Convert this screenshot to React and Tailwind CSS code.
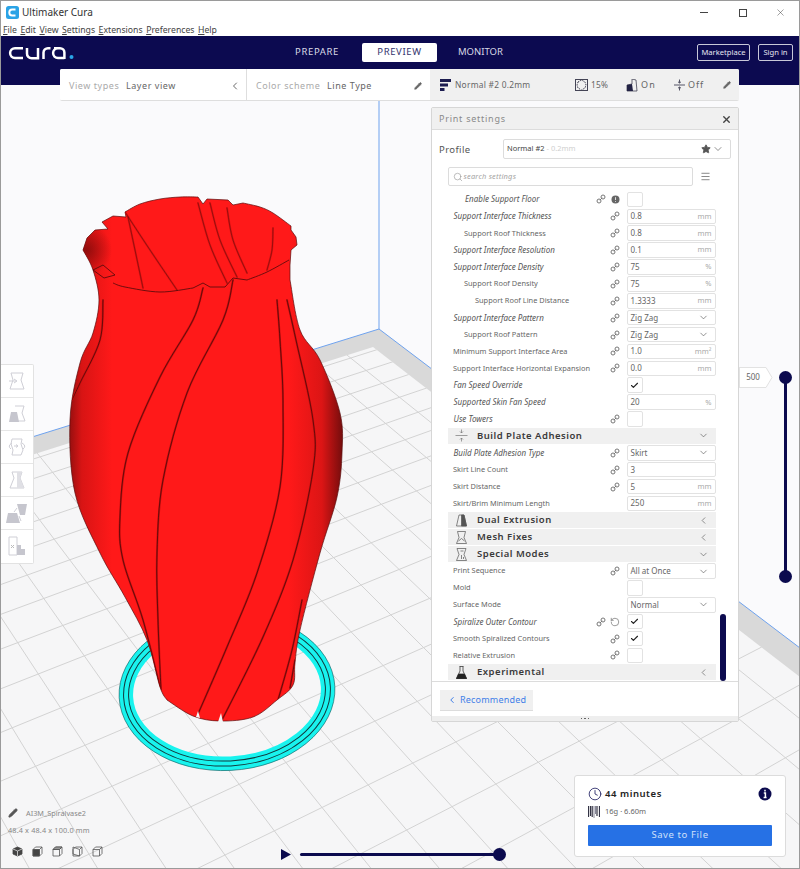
import { Check, ChevronDown, ChevronLeft, Clock, Menu, Search, Star, X, Pencil, RotateCcw } from "lucide-react";

const font = { fontFamily: '"Noto Sans", sans-serif' };

// smooth curve through points (catmull-rom to bezier)
function curve(pts) {
  let d = "";
  for (let i = 0; i < pts.length - 1; i++) {
    const p0 = pts[i - 1] || pts[i];
    const p1 = pts[i];
    const p2 = pts[i + 1];
    const p3 = pts[i + 2] || p2;
    const c1 = [p1[0] + (p2[0] - p0[0]) / 6, p1[1] + (p2[1] - p0[1]) / 6];
    const c2 = [p2[0] - (p3[0] - p1[0]) / 6, p2[1] - (p3[1] - p1[1]) / 6];
    d += ` C${c1[0]} ${c1[1]} ${c2[0]} ${c2[1]} ${p2[0]} ${p2[1]}`;
  }
  return d;
}
const open = (pts) => `M${pts[0][0]} ${pts[0][1]}` + curve(pts);

const rimLeft = [[83, 250], [87, 238], [95, 230], [108, 229], [102, 222], [113, 216], [126, 217], [125, 212]];
const rimBack = [[125, 212], [140, 204], [160, 199], [180, 197], [198, 197]];
const rimRight = [[198, 197], [203, 204], [207, 199], [228, 200], [233, 205], [243, 203]];
const rimFar = [[243, 203], [260, 207], [273, 213], [291, 226]];
const rimEnd = [[291, 226], [291, 230], [296, 237], [297, 245], [291, 250], [290, 265], [290, 280]];
const rightSide = [
  [290, 280], [300, 330], [320, 360], [340, 413], [342, 453], [337, 497], [320, 553], [300, 630], [295, 663], [293, 685], [277, 700],
  [253, 717], [220, 721], [193, 716], [167, 700],
];
const leftSide = [
  [167, 700], [160, 687], [147, 640], [125, 597], [100, 553], [75, 493], [70, 420], [80, 363], [93, 333], [99, 300], [93, 270], [83, 250],
];
const lines = (pts) => pts.slice(1).map((p) => `L${p[0]} ${p[1]}`).join(" ");
const vaseOutline =
  `M83 250 ${lines(rimLeft)}` + curve(rimBack) + " " + lines(rimRight) + curve(rimFar) + " " + lines(rimEnd) + curve(rightSide) + curve(leftSide) + " Z";

const ridges = [
  [[203, 288], [193, 320], [160, 377], [128, 453], [120, 517], [123, 560], [143, 620], [160, 687]],
  [[233, 280], [223, 320], [187, 393], [163, 480], [157, 553], [158, 620], [161, 690]],
  [[277, 300], [280, 340], [283, 403], [280, 487], [257, 573], [227, 647], [198, 714]],
  [[287, 300], [296, 340], [313, 420], [313, 470], [293, 560], [263, 637], [222, 720]],
  [[103, 300], [100, 340], [80, 383], [72, 400]],
  [[302, 600], [292, 650], [278, 700]],
  [[295, 660], [290, 688]],
];
const innerRidges = [
  [[125, 212], [150, 250], [177, 290]],
  [[128, 217], [135, 250], [143, 288]],
  [[198, 203], [210, 245], [227, 283]],
  [[210, 203], [220, 240], [237, 277]],
  [[227, 208], [233, 240], [247, 273]],
  [[273, 228], [272, 250], [267, 270]],
];

function Scene() {
  const vaA = [-750, -526];
  const vaB = [2890, -450];
  const linesA = [];
  for (let k = -16; k < 14; k++) {
    const x = 50 + 64.5 * k;
    const t = (900 - vaA[1]) / (790 - vaA[1]);
    linesA.push([vaA[0], vaA[1], vaA[0] + (x - vaA[0]) * t, 900]);
  }
  const ysB = [458, 476, 496, 517, 540, 565, 592, 622, 657, 697, 741, 790, 845, 905, 975, 1050, 1130, 1220];
  const linesB = ysB.map((y) => [-10, y - (10 * (y - vaB[1])) / vaB[0], vaB[0], vaB[1]]);

  return (
    <svg className="absolute inset-0" width="800" height="784" viewBox="0 85 800 784">
      <defs>
        <clipPath id="floor">
          <polygon points="373,347 0,465 0,869 800,869 800,677" />
        </clipPath>
        <clipPath id="vaseClip">
          <path d={vaseOutline} />
        </clipPath>
        <linearGradient id="vaseFill" gradientUnits="userSpaceOnUse" x1="68" x2="344" y1="0" y2="0">
          <stop offset="0" stopColor="#8f0f0f" />
          <stop offset="0.05" stopColor="#d81414" />
          <stop offset="0.16" stopColor="#ff1919" />
          <stop offset="0.8" stopColor="#ff1919" />
          <stop offset="0.92" stopColor="#dc1515" />
          <stop offset="1" stopColor="#6d0c0c" />
        </linearGradient>
        <radialGradient id="innerDark" gradientUnits="userSpaceOnUse" cx="86" cy="250" r="26">
          <stop offset="0" stopColor="#7d0a0a" stopOpacity="0.8" />
          <stop offset="1" stopColor="#7d0a0a" stopOpacity="0" />
        </radialGradient>
      </defs>
      <rect x="0" y="85" width="800" height="784" fill="#fafafc" />
      <polygon points="379,329 0,447 0,869 800,869 800,648" fill="#d9d9d9" />
      <polygon points="373,347 0,465 0,869 800,869 800,677" fill="#f6f6f7" />
      <g clipPath="url(#floor)" stroke="#d3d3d3" strokeWidth="1">
        {linesA.map((l, i) => (
          <line key={i} x1={l[0]} y1={l[1]} x2={l[2]} y2={l[3]} />
        ))}
        {linesB.map((l, i) => (
          <line key={i} x1={l[0]} y1={l[1]} x2={l[2]} y2={l[3]} />
        ))}
      </g>
      <path d="M379 100 V329 L0 447 M379 329 L800 648" fill="none" stroke="#6ea2ee" strokeWidth="1" />

      <g transform="rotate(-3 227 692)">
        <ellipse cx="227" cy="692" rx="101" ry="71.5" fill="none" stroke="#19f3ee" strokeWidth="14" />
        <ellipse cx="227" cy="692" rx="108" ry="78.5" fill="none" stroke="#14575a" strokeWidth="0.6" />
        <ellipse cx="227" cy="692" rx="103.5" ry="74" fill="none" stroke="#12383c" strokeWidth="1" />
        <ellipse cx="227" cy="692" rx="98.5" ry="69" fill="none" stroke="#12383c" strokeWidth="1" />
      </g>

      <path d={vaseOutline} fill="url(#vaseFill)" stroke="#5a0c0c" strokeWidth="0.7" />
      <g clipPath="url(#vaseClip)">
        <circle cx="86" cy="250" r="26" fill="url(#innerDark)" />
        <g fill="none" strokeLinecap="round">
          {ridges.map((r, i) => (
            <path key={i} d={open(r)} stroke="#c81010" strokeWidth="2" />
          ))}
          {innerRidges.map((r, i) => (
            <path key={i} d={open(r)} stroke="#dc1414" strokeWidth="2" />
          ))}
          {ridges.map((r, i) => (
            <path key={i} d={open(r)} stroke="#3a0808" strokeWidth="0.7" />
          ))}
          {innerRidges.map((r, i) => (
            <path key={i} d={open(r)} stroke="#6a0a0a" strokeWidth="0.6" />
          ))}
        </g>
      </g>
      <path
        d={"M93 270 L103 265 L115 275 L104 278 L93 270 M113 283" + curve([[113, 283], [125, 287], [160, 292], [193, 288]]) + " L197 286 L203 283 L210 287 L225 287 L233 278 L247 280" + curve([[247, 280], [267, 272], [289, 260]])}
        fill="none"
        stroke="#4a0a0a"
        strokeWidth="0.8"
      />
      <polygon points="196,717 198,711 200,718" fill="#f6f6f7" />
      <polygon points="218,722 221,713 223,722" fill="#f6f6f7" />
    </svg>
  );
}

const LinkIcon = () => (
  <svg width="10" height="10" viewBox="0 0 10 10" fill="none" stroke="#777" strokeWidth="1">
    <circle cx="3" cy="7" r="2" />
    <circle cx="7" cy="3" r="2" />
    <path d="M3.8 6.2 L6.2 3.8" />
  </svg>
);

const InfoDot = () => (
  <svg width="9" height="9" viewBox="0 0 9 9">
    <circle cx="4.5" cy="4.5" r="4" fill="#666" />
    <path d="M4.5 2.2 V5 M4.5 6 V6.9" stroke="#ddd" strokeWidth="1" />
  </svg>
);

function Flask({ kind, color = "#444" }) {
  return (
    <svg width="14" height="15" viewBox="0 0 14 15" fill="none" stroke={color} strokeWidth="0.7">
      {kind === "plate" && (
        <>
          <path d="M1 7.5 H13" stroke="#777" />
          <path d="M7 1.5 V5 M5.5 3.5 L7 5 L8.5 3.5 M7 13.5 V10 M5.5 11.5 L7 10 L8.5 11.5" stroke="#777" />
        </>
      )}
      {kind === "dual" && (
        <>
          <path d="M4.5 2 H9.5 L12 13 H2 Z" />
          <path d="M7 2 H9.5 L12 13 H7 Z" fill={color} />
        </>
      )}
      {kind === "mesh" && (
        <>
          <path d="M3 1.5 H11 L9.5 7.5 L12 13.5 H2 L4.5 7.5 Z" />
          <path d="M4 11 L7 8.5 L10 11" />
        </>
      )}
      {kind === "special" && (
        <>
          <path d="M2.5 1.5 H11.5 L9.5 7.5 L12 13.5 H2 L4.5 7.5 Z" />
          <path d="M6 4 H9 M7 8 V12 M9 10 V12" />
        </>
      )}
      {kind === "exp" && (
        <>
          <path d="M5 1.5 H9 M5.5 1.5 V6 L2 13.5 H12 L8.5 6 V1.5" />
          <path d="M4 9 H10 L12 13.5 H2 Z" fill={color} />
        </>
      )}
    </svg>
  );
}

const rows = [
  { label: "Enable Support Floor", ml: "ml-[17.5px]", it: true, type: "check", link2: true, info: true },
  { label: "Support Interface Thickness", ml: "ml-[6px]", it: true, value: "0.8", unit: "mm", link: true },
  { label: "Support Roof Thickness", ml: "ml-[16.5px]", value: "0.8", unit: "mm", link: true },
  { label: "Support Interface Resolution", ml: "ml-[6px]", it: true, value: "0.1", unit: "mm", link: true },
  { label: "Support Interface Density", ml: "ml-[6px]", it: true, value: "75", unit: "%", link: true },
  { label: "Support Roof Density", ml: "ml-[16.5px]", value: "75", unit: "%", link: true },
  { label: "Support Roof Line Distance", ml: "ml-[27.5px]", value: "1.3333", unit: "mm", link: true },
  { label: "Support Interface Pattern", ml: "ml-[6px]", it: true, value: "Zig Zag", select: true, link: true },
  { label: "Support Roof Pattern", ml: "ml-[16.5px]", value: "Zig Zag", select: true, link: true },
  { label: "Minimum Support Interface Area", ml: "ml-[5.5px]", value: "1.0", unit: "mm²", link: true },
  { label: "Support Interface Horizontal Expansion", ml: "ml-[5.5px]", value: "0.0", unit: "mm", link: true },
  { label: "Fan Speed Override", ml: "ml-[6px]", it: true, type: "check", checked: true },
  { label: "Supported Skin Fan Speed", ml: "ml-[6px]", it: true, value: "20", unit: "%" },
  { label: "Use Towers", ml: "ml-[6px]", it: true, type: "check", link: true },
  { section: "Build Plate Adhesion", icon: "plate", down: true },
  { label: "Build Plate Adhesion Type", ml: "ml-[6px]", it: true, value: "Skirt", select: true, link: true },
  { label: "Skirt Line Count", ml: "ml-[5.5px]", value: "3", link: true },
  { label: "Skirt Distance", ml: "ml-[5.5px]", value: "5", unit: "mm", link: true },
  { label: "Skirt/Brim Minimum Length", ml: "ml-[5.5px]", value: "250", unit: "mm" },
  { section: "Dual Extrusion", icon: "dual" },
  { section: "Mesh Fixes", icon: "mesh" },
  { section: "Special Modes", icon: "special", down: true },
  { label: "Print Sequence", ml: "ml-[5.5px]", value: "All at Once", select: true, link: true },
  { label: "Mold", ml: "ml-[5.5px]", type: "check" },
  { label: "Surface Mode", ml: "ml-[5.5px]", value: "Normal", select: true },
  { label: "Spiralize Outer Contour", ml: "ml-[6px]", it: true, type: "check", checked: true, link2: true, reset: true },
  { label: "Smooth Spiralized Contours", ml: "ml-[5.5px]", type: "check", checked: true, link: true },
  { label: "Relative Extrusion", ml: "ml-[5.5px]", type: "check", link: true },
  { section: "Experimental", icon: "exp" },
];

function SettingRow({ row }) {
  if (row.section) {
    return (
      <div className="flex items-center h-[16.9px] py-[0.5px]">
        <div className="flex items-center w-full h-full bg-[#f0f0f0]">
          <div className="w-[29.5px] flex justify-center -translate-x-[0.5px]">
            <Flask kind={row.icon} color={row.icon === "exp" ? "#222" : "#555"} />
          </div>
          <span className="flex-1 text-[9.5px] font-semibold tracking-[0.5px] text-[#3a3a3a]">{row.section}</span>
          {row.down ? (
            <ChevronDown size={11} strokeWidth={1.4} className="text-[#555] mr-[6.5px]" />
          ) : (
            <ChevronLeft size={11} strokeWidth={1.4} className="text-[#555] mr-[6.5px]" />
          )}
        </div>
      </div>
    );
  }
  return (
    <div className="flex items-center h-[16.9px]">
      <span className={"flex-1 min-w-0 whitespace-nowrap " + row.ml + (row.it ? " italic text-[8px] text-[#555]" : " text-[7.4px] text-[#666]")}>{row.label}</span>
      <div className="w-[14px] flex justify-center">{row.link2 && <LinkIcon />}</div>
      <div className="w-[14px] flex justify-center mr-[4.5px]">
        {row.link && <LinkIcon />}
        {row.info && <InfoDot />}
        {row.reset && <RotateCcw size={10} strokeWidth={1.4} className="text-[#555]" />}
      </div>
      {row.type === "check" ? (
        <div className="w-[89px] h-[15.5px]">
          <div className="w-[16px] h-full flex items-center justify-center bg-white border border-[#e2e2e2] rounded-[2px]">
            {row.checked && <Check size={9} strokeWidth={3} className="text-[#222]" />}
          </div>
        </div>
      ) : (
        <div className="w-[89px] h-[15.5px] flex items-center justify-between pl-[3px] pr-[3px] bg-white border border-[#e2e2e2] rounded-[2px] text-[8px] text-[#666]">
          <span>{row.value}</span>
          {row.unit && <span className="text-[7.5px] text-[#aaa]">{row.unit}</span>}
          {row.select && <ChevronDown size={11} strokeWidth={1.4} className="text-[#555] mr-[3px]" />}
        </div>
      )}
    </div>
  );
}

function PrintSettings() {
  return (
    <div className="absolute left-[431px] top-[22px] w-[308px] h-[615px] flex flex-col bg-white border border-[#d6d6d6] rounded-[2px]">
      <div className="flex items-center justify-between h-[22px] pl-[7px] pr-[6px] pt-[1px] bg-[#f0f0f0] border-b border-[#dcdcdc]">
        <span className="text-[9px] tracking-[0.75px] text-[#8a8a8a]">Print settings</span>
        <X size={11} strokeWidth={3} className="text-[#444]" />
      </div>
      <div className="flex items-center h-[20px] mt-[9px] ml-[7px]">
        <span className="w-[64px] translate-y-[1px] text-[9.5px] tracking-[0.4px] text-[#555]">Profile</span>
        <div className="w-[228px] h-full flex items-center pl-[3px] border border-[#dcdcdc] rounded-[2px] text-[7.5px]">
          <span className="flex-1 text-[#444]">
            Normal #2 <span className="text-[#cfcfcf]">- 0.2mm</span>
          </span>
          <Star size={10} className="text-[#555] fill-[#555] mr-[1px]" />
          <ChevronDown size={12} strokeWidth={1.3} className="text-[#555] mr-[6px]" />
        </div>
      </div>
      <div className="flex items-center h-[19px] mt-[8px] ml-[15.5px]">
        <div className="w-[245px] h-full flex items-center pl-[4px] border border-[#dcdcdc] rounded-[2px]">
          <Search size={10} strokeWidth={1.3} className="text-[#888]" />
          <span className="ml-[1px] text-[7.5px] italic tracking-[0.2px] text-[#a4a4a4]">search settings</span>
        </div>
        <Menu size={11} strokeWidth={1.5} className="ml-[7px] text-[#555]" />
      </div>
      <div className="relative mt-[5px] h-[489.5px] overflow-hidden pl-[15.5px]">
        <div className="w-[268px]">
          {rows.map((row, i) => (
            <SettingRow key={i} row={row} />
          ))}
        </div>
        <div className="absolute right-[12px] bottom-0 w-[6px] h-[67px] rounded-[3px] bg-[#0d0b4f]" />
      </div>
      <div className="flex-1 border-t border-[#dcdcdc] pt-[8px] pl-[8px]">
        <button className="flex items-center w-[93px] h-[21px] pl-[7px] bg-[#f0f0f0] border-b border-[#dcdcdc] text-[9px] tracking-[0.2px] text-[#3f7fe8]">
          <ChevronLeft size={10} strokeWidth={2.4} className="mr-[3px]" />
          Recommended
        </button>
      </div>
      <div className="h-[5px] flex items-center justify-center bg-[#eeeeee] gap-[2px]">
        <span className="w-[1.5px] h-[1.5px] bg-[#666]" />
        <span className="w-[1.5px] h-[1.5px] bg-[#666]" />
        <span className="w-[1.5px] h-[1.5px] bg-[#666]" />
      </div>
    </div>
  );
}

function StageBar() {
  return (
    <div className="absolute left-[60px] top-[-16px] w-[679px] h-[32px] flex bg-white text-[9px] tracking-[0.55px] text-[#666] border-b border-[#dedede] rounded-[2px] overflow-hidden">
      <div className="w-[187px] flex items-center bg-white border-r border-[#dedede] pl-[9px] pt-[2px]">
        <span className="w-[57px] text-[#aaa]">View types</span>
        <span className="flex-1">Layer view</span>
        <ChevronLeft size={12} strokeWidth={1.6} className="mr-[5px] text-[#444]" />
      </div>
      <div className="w-[183px] flex items-center bg-white pl-[9px] pt-[2px]">
        <span className="w-[71px] text-[#aaa] whitespace-nowrap">Color scheme</span>
        <span className="flex-1">Line Type</span>
        <Pencil size={8} className="mr-[8px] text-[#666] fill-[#666]" />
      </div>
      <div className="flex-1 flex items-center bg-[#f0f0f0] pt-[1px]">
        <svg className="ml-[10px]" width="11" height="12" viewBox="0 0 11 12" fill="#1c1c50">
          <rect x="0" y="0" width="11" height="3" />
          <rect x="0" y="4.5" width="8" height="3" />
          <rect x="0" y="9" width="4.5" height="3" />
        </svg>
        <span className="ml-[4px] w-[120px] text-[8.4px] tracking-[0.25px]">Normal #2 0.2mm</span>
        <svg width="13" height="12" viewBox="0 0 13 12" fill="none" stroke="#445">
          <rect x="0.5" y="0.5" width="12" height="11" />
          <path d="M3 3 L6.5 1 L10 3 L11 6 L10 9 L6.5 11 L3 9 L2 6 Z" strokeDasharray="1.5 1" />
        </svg>
        <span className="ml-[3px] w-[35px] text-[8.4px] tracking-[0.25px]">15%</span>
        <svg width="12" height="13" viewBox="0 0 12 13" fill="#222244">
          <path d="M6 0 L10 1 L11 12 L1 12 L1 6 L6 5 Z" fill="none" stroke="#445" strokeWidth="0.8" />
          <path d="M1 6 L6 5 L7 12 L1 12 Z" />
        </svg>
        <span className="ml-[3px] w-[33px] tracking-[1.2px]">On</span>
        <svg width="11" height="12" viewBox="0 0 11 12" fill="none" stroke="#556">
          <path d="M0 6 H11 M5.5 0.5 V4 M4 2.8 L5.5 4 L7 2.8 M5.5 11.5 V8 M4 9.2 L5.5 8 L7 9.2" />
        </svg>
        <span className="ml-[3px] flex-1 tracking-[0.9px]">Off</span>
        <Pencil size={8} className="mr-[8px] text-[#666] fill-[#666]" />
      </div>
    </div>
  );
}

const toolIcons = [
  <g key="a" fill="none" stroke="#cfcfd6"><path d="M5 2 H17 L15 9 L18 18 H4 L7 9 Z" /><path d="M3 10 H10 M8 8 L11 10 L8 12" /></g>,
  <g key="b"><path d="M9 2 H18 L16 9 L19 17 H10" fill="none" stroke="#cfcfd6" /><path d="M5 8 H11 L13 18 H3 Z" fill="#c6c6ce" /></g>,
  <g key="c" fill="none" stroke="#cfcfd6"><path d="M6 2 H16 L15 7 L17 13 L15 18 H6 L7 13 L5 7 Z" /><path d="M6 6 Q1 9 5 12 M16 6 Q21 9 17 12 M8 9 H12 M10 7.5 L12 9 L10 10.5" /></g>,
  <g key="d"><path d="M6 2 H16 L14 8 L18 18 H4 L8 8 Z" fill="none" stroke="#cfcfd6" /><path d="M11 2 H16 L14 8 L18 18 H11 Z" fill="#e0e0e5" /></g>,
  <g key="e" fill="#c6c6ce"><path d="M2 10 H11 L14 20 H0 Z" /><path d="M11 1 H21 L19 12 H14 Z" /><path d="M11 5 L8 9 M13 13 L15 18" stroke="#cfcfd6" fill="none" /></g>,
  <g key="f"><path d="M3 1 H11 V19 H3 Z" fill="none" stroke="#cfcfd6" /><path d="M11 9 H15 V13 H19 V19 H11 Z" fill="#c6c6ce" /><path d="M5 9 L8 12 M8 9 L5 12" stroke="#bbb" /></g>,
];

function Toolbar() {
  return (
    <div className="absolute left-[1px] top-[279px] w-[33px] flex flex-col bg-white border border-l-0 border-[#e2e2e2] rounded-r-[2px]">
      {toolIcons.map((ic, i) => (
        <div key={i} className="h-[33px] flex items-center justify-center border-b last:border-b-0 border-[#e6e6e6]">
          <svg width="22" height="21" viewBox="0 0 22 21">{ic}</svg>
        </div>
      ))}
    </div>
  );
}

const Cube = ({ face }) => (
  <svg width="11" height="11" viewBox="0 0 11 11" stroke="#555" strokeWidth="0.8" fill="none">
    {face === "top" && <path d="M1 3 L5.5 1 L10 3 L10 8 L5.5 10 L1 8 Z" fill="#444" stroke="#444" />}
    {face === "top" && <path d="M1 3 L5.5 5 L10 3 M5.5 5 V10" stroke="#ddd" />}
    {face !== "top" && <path d="M3.5 1 H10 V7.5 L7.5 10 H1 V3.5 Z" />}
    {face === "front" && <path d="M1 3.5 H7.5 V10 H1 Z" fill="#444" />}
    {face === "left" && <path d="M1 1 L7.5 3.5 V10 L1 8 Z M7.5 3.5 L10 1" />}
    {face === "back" && <path d="M3.5 1 H10 L7.5 3.5 H1 Z" fill="#999" />}
    {face !== "left" && face !== "top" && <path d="M1 3.5 H7.5 V10 M7.5 3.5 L10 1" />}
  </svg>
);

function ModelInfo() {
  return (
    <div className="absolute left-[8px] top-[723px] text-[7.3px] text-[#888]">
      <div className="flex items-center">
        <Pencil size={10} className="text-[#555] fill-[#555]" />
        <span className="ml-[8px]">AI3M_Spiralvase2</span>
      </div>
      <div className="mt-[6px] tracking-[0.15px] whitespace-nowrap">48.4 x 48.4 x 100.0 mm</div>
      <div className="flex gap-[9px] mt-[10px] ml-[4px]">
        <Cube face="top" />
        <Cube face="front" />
        <Cube face="back" />
        <Cube face="left" />
        <Cube face="right" />
      </div>
    </div>
  );
}

function TimeSlider() {
  return (
    <div className="absolute left-[281px] top-[762px] flex items-center h-[14px]">
      <svg width="10" height="11" viewBox="0 0 10 11">
        <path d="M0 0 L10 5.5 L0 11 Z" fill="#0b0a4e" />
      </svg>
      <div className="ml-[9px] w-[195px] h-[3px] bg-[#0b0a4e] rounded-full" />
      <div className="-ml-[2px] w-[13px] h-[13px] rounded-full bg-[#0b0a4e]" />
    </div>
  );
}

function LayerSlider() {
  return (
    <>
      <div className="absolute left-[779px] top-[286px] h-[212px] w-[13px] flex flex-col items-center">
        <div className="w-[13px] h-[13px] shrink-0 rounded-full bg-[#0b0a4e]" />
        <div className="flex-1 -my-[1px] w-[3px] bg-[#0b0a4e]" />
        <div className="w-[13px] h-[13px] shrink-0 rounded-full bg-[#0b0a4e]" />
      </div>
      <div className="absolute left-[739px] top-[281px] w-[34px] h-[22px] flex items-center">
        <div className="w-[27px] h-[21px] flex items-center justify-center bg-white border border-[#e2e2e2] border-r-0 text-[8px] text-[#666]">500</div>
        <svg width="7" height="21" viewBox="0 0 7 21" fill="#fff" stroke="#e2e2e2">
          <path d="M0 0.5 L6 10.5 L0 20.5" />
        </svg>
      </div>
    </>
  );
}

function ActionPanel() {
  return (
    <div className="absolute left-[574px] top-[690px] w-[212px] h-[82px] bg-white border border-[#dcdcdc] rounded-[3px] pt-[10px] px-[13px]">
      <div className="flex items-center h-[15px]">
        <Clock size={14} strokeWidth={1.4} className="text-[#1c1c60]" />
        <span className="ml-[3px] flex-1 translate-y-[1px] text-[9.5px] font-semibold tracking-[0.55px] text-[#222]">44 minutes</span>
        <svg width="14" height="14" viewBox="0 0 14 14">
          <circle cx="7" cy="7" r="6.5" fill="#0b0a4e" />
          <path d="M7 2.8 V4.4 M5.8 6 H7.4 V10.3 M5.6 10.5 H8.6" stroke="#fff" strokeWidth="1.5" fill="none" />
        </svg>
      </div>
      <div className="flex items-center h-[13px] mt-[4px]">
        <svg width="12" height="12" viewBox="0 0 12 12" stroke="#334" strokeWidth="1">
          <path d="M0.5 0 V11 M2.5 0 V10 M4.2 0 V11" strokeWidth="1.2" />
          <path d="M6 0 V12 M7.5 0 V8" stroke="#889" />
          <path d="M9 0 V10 M11.5 0 V11" strokeWidth="1.2" />
        </svg>
        <span className="ml-[5px] text-[7.5px] text-[#666]">16g · 6.60m</span>
      </div>
      <button className="mt-[7px] w-full h-[21px] bg-[#2671e5] rounded-[1px] text-[9.5px] tracking-[0.6px] text-[#cfe0fa]">Save to File</button>
    </div>
  );
}

function TitleBar() {
  return (
    <div className="h-[25px] flex items-center bg-white pl-[6px] shrink-0">
      <svg width="13" height="13" viewBox="0 0 13 13">
        <rect width="13" height="13" rx="2.5" fill="#2aa3e6" />
        <path d="M9.5 3.6 H6.2 A2.9 2.9 0 0 0 6.2 9.4 H9.5" fill="none" stroke="#fff" strokeWidth="2" />
      </svg>
      <span className="ml-[3px] text-[10px] text-[#333]">Ultimaker Cura</span>
      <div className="ml-auto flex items-center mr-[14px]">
        <div className="w-[8px] h-px bg-[#444] mr-[31px]" />
        <div className="w-[8px] h-[8px] border border-[#444] mr-[28px]" />
        <X size={11} strokeWidth={1} className="text-[#333]" />
      </div>
    </div>
  );
}

const menus = [
  ["F", "ile"],
  ["E", "dit"],
  ["V", "iew"],
  ["S", "ettings"],
  ["E", "xtensions"],
  ["P", "references"],
  ["H", "elp"],
];

function MenuBar() {
  return (
    <div className="h-[11px] flex items-center gap-[3.5px] bg-white pl-[3px] text-[8.7px] text-[#444] shrink-0">
      {menus.map((m, i) => (
        <span key={i}>
          <span className="underline">{m[0]}</span>
          {m[1]}
        </span>
      ))}
    </div>
  );
}

function NavBar() {
  return (
    <div className="relative h-[49px] flex items-start bg-[#0c0a50] shrink-0">
      <svg className="absolute left-0 top-0" width="80" height="30" viewBox="0 36 80 30" fill="none" stroke="#fff" strokeWidth="2.5">
        <path d="M23 48.2 H15 A4.9 4.9 0 0 0 15 58 H23" />
        <path d="M27 48 V53.5 A4.6 4.6 0 0 0 31.6 58.3 H38 V48" />
        <path d="M43.5 59 V52.5 A4.4 4.4 0 0 1 48 48.2 H50.5" />
        <path d="M54 48.2 H60 A4.4 4.4 0 0 1 64.4 52.6 V59 M64.4 58 H58 A4.9 4.9 0 0 1 58 48.2" />
        <circle cx="71.5" cy="57" r="2" fill="#29a5e8" stroke="none" />
      </svg>
      <div className="absolute left-[295px] top-[7px] h-[19px] flex items-center text-[9.5px] tracking-[0.65px] text-[#d8d8e6]">
        <span className="w-[67px]">PREPARE</span>
        <span className="w-[75px] h-full flex items-center justify-center bg-white rounded-[2px] text-[#33336e]">PREVIEW</span>
        <span className="ml-[21px] tracking-[0px]">MONITOR</span>
      </div>
      <div className="absolute left-[697px] top-[8px] flex gap-[8px] text-[7.6px] text-[#e6e6f0]">
        <span className="w-[53px] h-[17px] flex items-center justify-center border border-[#c8c8d8] rounded-[2px]">Marketplace</span>
        <span className="w-[35px] h-[17px] flex items-center justify-center border border-[#c8c8d8] rounded-[2px]">Sign in</span>
      </div>
    </div>
  );
}

export default function App() {
  return (
    <div className="relative w-[800px] h-[869px] flex flex-col overflow-hidden bg-white" style={font}>
      <TitleBar />
      <MenuBar />
      <NavBar />
      <div className="relative flex-1">
        <Scene />
        <StageBar />
        <Toolbar />
        <PrintSettings />
        <ModelInfo />
        <TimeSlider />
        <LayerSlider />
        <ActionPanel />
      </div>
      <div className="absolute inset-0 border border-[#9a9a9a] pointer-events-none" />
    </div>
  );
}
